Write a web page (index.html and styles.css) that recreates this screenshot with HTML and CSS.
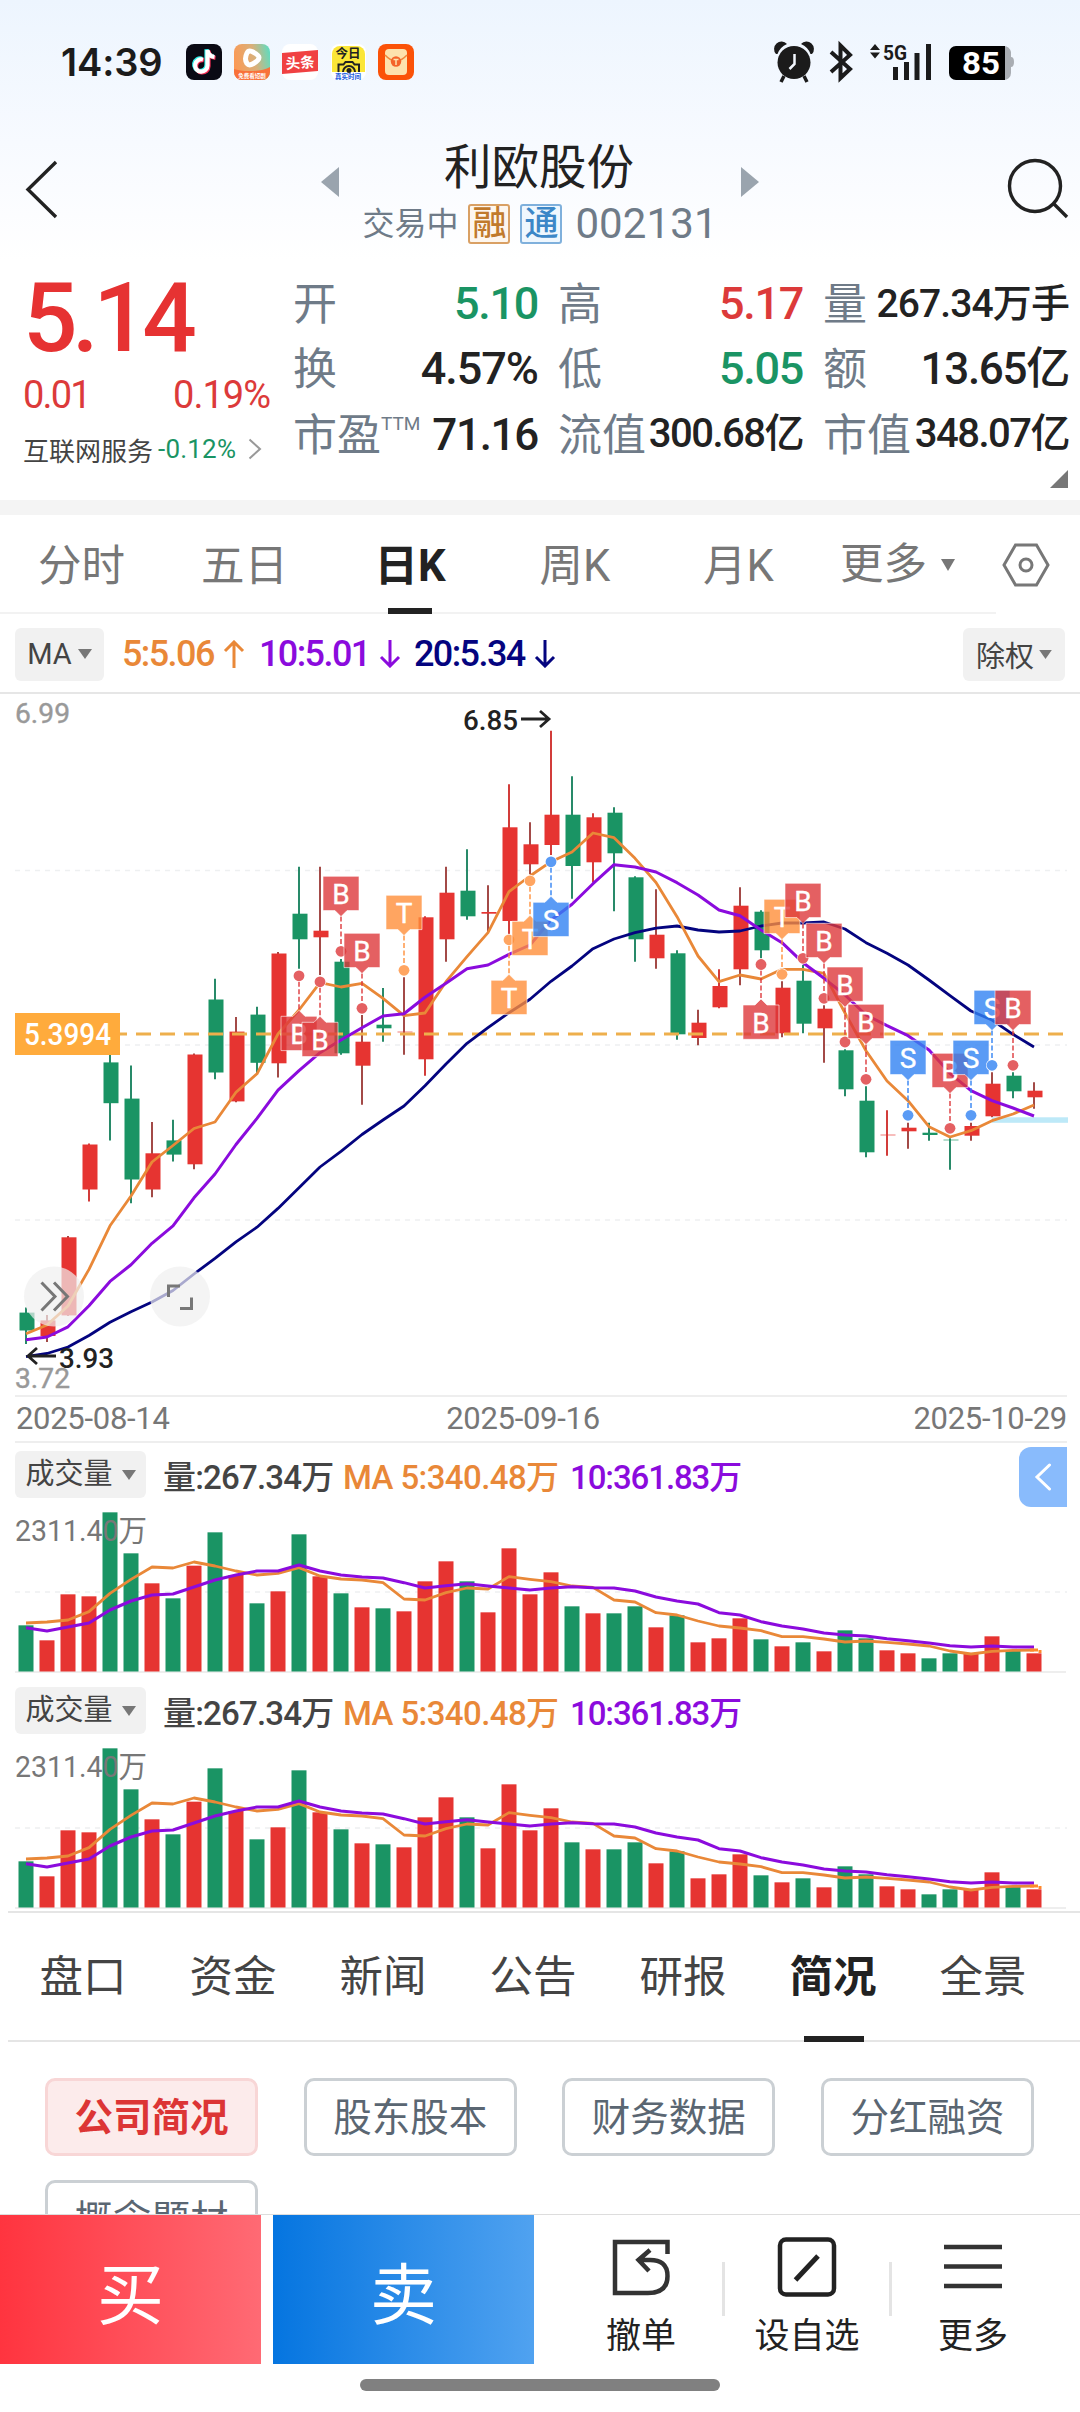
FILE: index.html
```html
<!DOCTYPE html>
<html lang="zh-CN">
<head>
<meta charset="utf-8">
<title>利欧股份 002131</title>
<link rel="stylesheet" href="styles.css">
</head>
<body>
<div class="screen">
  <div class="content">
    <header class="top">
      <div class="status">
        <span class="clock">14:39</span>
        <div class="apps">
          <svg width="36" height="36" viewBox="0 0 36 36"><rect width="36" height="36" rx="8" fill="#0a0a14"/><g fill="none" stroke-width="4.2"><path d="M17 15.500a6.200 6.200 0 1 0 4.500 6V6c.5 4 3 6.500 7 7" transform="translate(-1 -.8)" stroke="#2cf0ea"/><path d="M17 15.500a6.200 6.200 0 1 0 4.500 6V6c.5 4 3 6.500 7 7" transform="translate(1 .8)" stroke="#fb2d55"/><path d="M17 15.500a6.200 6.200 0 1 0 4.500 6V6c.5 4 3 6.500 7 7" stroke="#fff"/></g></svg>
          <svg width="36" height="36" viewBox="0 0 36 36"><defs><linearGradient id="play" x1="0" y1=".4" x2="1" y2=".2"><stop offset="0" stop-color="#fb9a56"/><stop offset=".55" stop-color="#d9b07a"/><stop offset="1" stop-color="#5fdcc0"/></linearGradient></defs><rect width="36" height="36" rx="8" fill="url(#play)"/><path d="M0 25C8 28 28 28 36 23V28a8 8 0 0 1-8 8H8a8 8 0 0 1-8-8Z" fill="#f9713a"/><path d="M13 9c-2 4-2 7.500 0 10.500 1.500 2 4 1.500 6.500 0 3-1.800 5.500-3.500 5.500-6S21 9 18 7.500c-2.500-1-4-.5-5 1.500Z" fill="none" stroke="#fff" stroke-width="5"/><text x="18" y="34" text-anchor="middle" class="app-text" font-size="5.500" fill="#fff">免费看短剧</text></svg>
          <svg width="36" height="36" viewBox="0 0 36 36"><rect width="36" height="36" rx="8" fill="#fff"/><path d="M0 9 36 6V27L0 30Z" fill="#f04142"/><text x="18" y="24" text-anchor="middle" class="app-text" font-size="14.500" fill="#fff" transform="rotate(-4 18 18)">头条</text></svg>
          <svg width="36" height="36" viewBox="0 0 36 36"><rect x="1" width="35" height="36" rx="8" fill="#fff"/><path d="M2 10a8 8 0 0 1 8-8h17a8 8 0 0 1 8 8v18H2Z" fill="#fbe637"/><text x="18" y="14" text-anchor="middle" class="app-text" font-size="12.500" fill="#222">今日</text><path d="M8.500 28V20.500h5l2-2.500h7l2 2.500h4.500V28M13 28a6 6 0 0 1 12 0" fill="none" stroke="#222" stroke-width="2"/><circle cx="19" cy="26.500" r="2.500" fill="#222"/><text x="18" y="34.500" text-anchor="middle" class="app-text" font-size="6.500" fill="#1a5be0">真实时间</text></svg>
          <svg width="36" height="36" viewBox="0 0 36 36"><rect width="36" height="36" rx="8" fill="#fb5208"/><rect x="7" y="5" width="22" height="26" rx="4" fill="#fde2ae"/><path d="M7 11Q18 23 29 11" fill="none" stroke="#f0863c" stroke-width="1.500"/><circle cx="18" cy="17.500" r="5.200" fill="#f4642a"/><path d="M15.500 15.500h5M18 15.500v5.500" stroke="#fde2ae" stroke-width="1.500"/></svg>
        </div>
        <svg class="signals" width="242" height="40" viewBox="0 0 242 40">
          <g fill="#1b1b1b"><circle cx="18" cy="20.500" r="16.500"/><path d="M0 12a7 7 0 0 1 11-10q-7 3-9.500 10ZM36 12A7 7 0 0 0 25 2q7 3 9.500 10Z"/></g>
          <path d="M8 34l-3 6M28 34l3 6" stroke="#1b1b1b" stroke-width="3.500"/><path d="M18.500 12v10l-5 5" fill="none" stroke="#f2f7fe" stroke-width="2.500"/>
          <path d="M55 10l19 17-9.500 9V3.500L74 13 55 30" fill="none" stroke="#1b1b1b" stroke-width="4"/>
          <path d="M94 8 99 2l5 6ZM94 10.500 99 16.500l5-6Z" fill="#1b1b1b"/>
          <text x="107" y="17.500" class="g5" textLength="24" lengthAdjust="spacingAndGlyphs">5G</text>
          <path d="M119.500 25v13M130.500 20v18M141 11v27M152.500 2v36" stroke="#1b1b1b" stroke-width="5" stroke-linecap="butt"/>
          <path d="M227 4h1a7 7 0 0 1 7 6v5q3 0 3 5t-3 5v6a7 7 0 0 1-7 7h-1Z" fill="#a9adb3"/>
          <path d="M180 4h49v34h-49a7 7 0 0 1-7-7V11a7 7 0 0 1 7-7Z" fill="#000"/>
          <text x="186" y="32" class="batt" textLength="38" lengthAdjust="spacingAndGlyphs">85</text>
        </svg>
      </div>
      <div class="navbar">
        <svg class="back" width="34" height="60" viewBox="0 0 34 60"><path d="M31 3 3 30.500 31 58" fill="none" stroke="#222" stroke-width="3.400"/></svg>
        <svg class="tri" width="18" height="30" viewBox="0 0 18 30"><path d="M18 0V30L0 15Z" fill="#9aa4ae"/></svg>
        <div class="title">
          <h1>利欧股份</h1>
          <div class="sub"><span>交易中</span><b class="tag tag-r">融</b><b class="tag tag-t">通</b><span class="code">002131</span></div>
        </div>
        <svg class="tri" width="18" height="30" viewBox="0 0 18 30"><path d="M0 0V30L18 15Z" fill="#9aa4ae"/></svg>
        <svg class="search" width="64" height="64" viewBox="0 0 64 64"><circle cx="29" cy="29" r="25.500" fill="none" stroke="#222" stroke-width="3.400"/><path d="M48 47 61 60" stroke="#222" stroke-width="3.400"/></svg>
      </div>
    </header>

    <section class="quote">
      <div class="price">
        <div class="last">5.14</div>
        <div class="chg"><span>0.01</span><span>0.19%</span></div>
        <div class="sector">互联网服务<i>-0.12%</i><svg width="14" height="22" viewBox="0 0 14 22"><path d="M1.500 1.500 12 11 1.500 20.500" fill="none" stroke="#999" stroke-width="2"/></svg></div>
      </div>
      <dl class="stats">
        <div><dt>开</dt><dd class="green">5.10</dd></div>
        <div><dt>高</dt><dd class="red">5.17</dd></div>
        <div><dt>量</dt><dd class="sm">267.34万手</dd></div>
        <div><dt>换</dt><dd class="pct">4.57%</dd></div>
        <div><dt>低</dt><dd class="green">5.05</dd></div>
        <div><dt>额</dt><dd>13.65亿</dd></div>
        <div><dt>市盈<sup>TTM</sup></dt><dd>71.16</dd></div>
        <div><dt>流值</dt><dd class="md">300.68亿</dd></div>
        <div><dt>市值</dt><dd class="md">348.07亿</dd></div>
      </dl>
      <svg class="corner" width="18" height="18" viewBox="0 0 18 18"><path d="M18 0V18H0Z" fill="#777"/></svg>
    </section>

    <nav class="periods">
      <span>分时</span><span>五日</span><span class="on">日K</span><span>周K</span><span>月K</span>
      <span class="more">更多<svg width="14" height="12" viewBox="0 0 14 12"><path d="M0 0H14L7 12Z" fill="#777"/></svg></span>
      <svg class="hex" width="48" height="44" viewBox="0 0 48 44"><path d="M13.500 2h21L46 22 34.500 42h-21L2 22Z" fill="none" stroke="#777" stroke-width="3"/><circle cx="24" cy="22" r="6" fill="none" stroke="#777" stroke-width="3"/></svg>
    </nav>

    <div class="ma">
      <span class="pick">MA<svg width="14" height="10" viewBox="0 0 14 10"><path d="M0 0H14L7 10Z" fill="#777"/></svg></span>
      <span class="val c5">5:5.06<svg width="22" height="28" viewBox="0 0 22 28"><path d="M11 28V2M2 11l9-9 9 9" fill="none" stroke="currentColor" stroke-width="3"/></svg></span>
      <span class="val c10">10:5.01<svg width="22" height="28" viewBox="0 0 22 28"><path d="M11 0V26M2 17l9 9 9-9" fill="none" stroke="currentColor" stroke-width="3"/></svg></span>
      <span class="val c20">20:5.34<svg width="22" height="28" viewBox="0 0 22 28"><path d="M11 0V26M2 17l9 9 9-9" fill="none" stroke="currentColor" stroke-width="3"/></svg></span>
      <span class="pick right">除权<svg width="13" height="9" viewBox="0 0 14 10"><path d="M0 0H14L7 10Z" fill="#777"/></svg></span>
    </div>

    <svg id="kline" class="kline" width="1080" height="702" viewBox="0 694 1080 702"></svg>
    <div class="dates"><span>2025-08-14</span><span class="mid-date">2025-09-16</span><span>2025-10-29</span></div>

    <section class="vol">
      <div class="vol-head"><span class="pick">成交量<svg width="14" height="10" viewBox="0 0 14 10"><path d="M0 0H14L7 10Z" fill="#777"/></svg></span><span class="v0">量:267.34万</span><span class="c5 v1">MA 5:340.48万</span><span class="c10 v2">10:361.83万</span>
        <span class="drawer"><svg width="18" height="28" viewBox="0 0 18 28"><path d="M15.500 2 3 14l12.500 12" fill="none" stroke="#fff" stroke-width="3" stroke-linecap="round"/></svg></span></div>
      <svg class="vol-chart" width="1080" height="172" viewBox="0 1507 1080 172"></svg>
    </section>
    <section class="vol last-vol">
      <div class="vol-head"><span class="pick">成交量<svg width="14" height="10" viewBox="0 0 14 10"><path d="M0 0H14L7 10Z" fill="#777"/></svg></span><span class="v0">量:267.34万</span><span class="c5 v1">MA 5:340.48万</span><span class="c10 v2">10:361.83万</span></div>
      <svg class="vol-chart" width="1080" height="168" viewBox="0 1507 1080 168"></svg>
    </section>

    <nav class="info"><span>盘口</span><span>资金</span><span>新闻</span><span>公告</span><span>研报</span><span class="on">简况</span><span>全景</span></nav>
    <div class="chips"><span class="on">公司简况</span><span>股东股本</span><span>财务数据</span><span>分红融资</span><span>概念题材</span></div>
  </div>

  <footer class="bar">
    <div class="acts">
      <button class="buy">买</button>
      <button class="sell">卖</button>
      <a class="act"><svg width="60" height="60" viewBox="0 0 60 60"><path d="M56.500 17V5H4v51h33q19.500 0 19.500-17T37 23H28M39 13 27.500 23 38 34" fill="none" stroke="#333" stroke-width="4.500"/></svg><span>撤单</span></a>
      <a class="act mid"><svg width="60" height="60" viewBox="0 0 60 60"><rect x="3" y="2.500" width="54" height="55" rx="6" fill="none" stroke="#222" stroke-width="4.500"/><path d="M18.500 43 41 19" stroke="#222" stroke-width="5"/></svg><span>设自选</span></a>
      <a class="act"><svg width="60" height="60" viewBox="0 0 60 60"><path d="M1 10H59M1 29.500H59M1 49H59" stroke="#333" stroke-width="4.500"/></svg><span>更多</span></a>
    </div>
    <div class="home"></div>
  </footer>
</div>
<script src="charts.js"></script>
</body>
</html>
```
FILE: styles.css
```css
* { box-sizing: border-box; margin: 0; padding: 0; }
body { width: 1080px; background: #fff; color: #222; font-family: Roboto, "Noto Sans CJK SC", sans-serif; }
svg { display: block; flex: none; }
.screen { width: 1080px; height: 2412px; display: flex; flex-direction: column; overflow: hidden; }
.content { height: 2214px; flex: none; overflow: hidden; }
.c5 { color: #e98838; }
.c10 { color: #8b0bdd; }
.c20 { color: #04047f; }
.red { color: #dc3a3a; }
.green { color: #1a9464; }

.top { height: 260px; background: linear-gradient(#edf5fe, #f7faff 55%, #fff); }
.status { height: 120px; padding: 4px 59px 0 61px; display: flex; align-items: center; }
.clock { width: 125px; font: 600 38px/44px Inter, sans-serif; letter-spacing: -.1px; color: #1b1b1b; white-space: nowrap; }
.apps { display: flex; gap: 12px; }
.signals { margin-left: auto; margin-right: 3px; overflow: visible; }
.app-text { font-family: "Noto Sans CJK SC", sans-serif; font-weight: 700; }
.g5 { font: 700 20px Roboto, sans-serif; fill: #1b1b1b; }
.batt { font: 700 31px Roboto, sans-serif; fill: #fff; }
.navbar { height: 140px; display: flex; align-items: flex-start; padding-left: 25px; }
.back { margin-top: 39px; }
.tri { margin-top: 47px; }
.back + .tri { margin-left: 262px; }
.title { width: 402px; margin-top: 18px; display: flex; flex-direction: column; align-items: center; }
.title h1 { font-size: 47.500px; line-height: 60px; font-weight: 400; margin-right: 2px; }
.sub { display: flex; align-items: center; height: 42px; margin-top: 5px; color: #6f7b88; font-size: 32px; }
.sub span { line-height: 42px; }
.tag { width: 42px; height: 40px; border: 2px solid; border-radius: 3px; font-size: 34px; line-height: 35px; font-weight: 500; text-align: center; }
.tag-r { margin-left: 10px; color: #c17a2c; border-color: #d9a064; background: #fdf6ee; }
.tag-t { margin-left: 10px; color: #3c87c7; border-color: #7fb0dc; background: #eff7fe; }
.sub .code { margin-left: 13px; font-size: 42px; letter-spacing: .1px; }
.search { margin-left: 247px; margin-top: 37px; }

.quote { height: 255px; position: relative; border-bottom: 15px solid #f4f4f4; display: flex; }
.price { width: 293px; padding-left: 23px; color: #e63232; }
.last { height: 114px; font-size: 96px; line-height: 116px; letter-spacing: -5.500px; font-weight: 500; }
.chg { margin-top: 2px; height: 38px; width: 247px; display: flex; justify-content: space-between; font-size: 38px; line-height: 38px; letter-spacing: -1px; color: #dc3a3a; }
.chg span:first-child { letter-spacing: -1.800px; }
.sector { margin-top: 18px; height: 34px; display: flex; align-items: center; font-size: 26px; color: #444; white-space: nowrap; }
.sector i { font-style: normal; color: #1a9464; letter-spacing: .2px; margin: 0 12px 0 5px; }
.stats { width: 776px; height: 196px; margin-top: 12px; display: grid; grid-template-columns: 245px 245px 246px; column-gap: 20px; grid-template-rows: repeat(3, 65.500px); }
.stats div { display: flex; justify-content: space-between; align-items: center; white-space: nowrap; }
.stats dt { font-size: 44px; line-height: 64px; color: #6f7b88; display: flex; }
.stats sup { font-size: 19px; line-height: 40px; }
.stats dd { font-size: 44px; line-height: 60px; letter-spacing: -1.300px; font-weight: 500; margin-right: 0; margin-top: -2px; }
.stats dd.red, .stats dd.green { font-size: 45px; }
.stats dd.pct { font-size: 45px; letter-spacing: -1px; }
.stats dd.sm { font-size: 39px; letter-spacing: -.900px; }
.stats dd.md { font-size: 40px; letter-spacing: -1.500px; margin-top: -4px; }
.corner { position: absolute; left: 1050px; top: 210px; }

.periods { height: 99px; display: grid; grid-template-columns: 163px 163px 168px 162px 165px 155px auto; align-items: start; position: relative; }
.periods::after { content: ""; position: absolute; left: 0; bottom: 0; width: 996px; height: 2px; background: #f2f2f2; z-index: -1; }
.periods span { height: 99px; line-height: 104px; font-size: 43.500px; color: #777; text-align: center; white-space: nowrap; }
.periods .on { position: relative; color: #222; font-weight: 700; }
.periods .on::after { content: ""; position: absolute; left: 62px; bottom: 0; width: 44px; height: 6px; background: #222; }
.periods .more { display: flex; align-items: center; gap: 14px; padding-left: 19px; }
.periods .hex { margin: 28px 0 0 26px; }

.ma { height: 80px; display: flex; align-items: center; padding: 2px 15px 0; border-bottom: 2px solid #e6e6e6; }
.pick { height: 53px; border-radius: 6px; background: #f1f1f1; color: #444; display: flex; align-items: center; justify-content: center; white-space: nowrap; }
.ma .pick { width: 89px; font-size: 29px; gap: 6px; }
.ma .right { width: 102px; margin-left: auto; font-size: 29px; gap: 5px; }
.val { display: flex; align-items: center; gap: 9px; font-size: 36px; letter-spacing: -1.600px; font-weight: 500; white-space: nowrap; }
.val.c5 { margin-left: 18px; width: 137px; }
.val.c10 { width: 155px; }

.kline text { font-family: Roboto, sans-serif; }
.dates { height: 48px; margin: -1px 13px 0 15px; border-top: 2px solid #eee; border-bottom: 2px solid #eee; display: flex; justify-content: space-between; font-size: 31px; line-height: 44px; color: #777; padding: 0 0 0 1px; letter-spacing: -.3px; }
.mid-date { margin-right: 37px; }

.vol { height: 236px; }
.last-vol { height: 232px; }
.vol-head { height: 64px; padding: 8px 13px 0 15px; display: flex; align-items: flex-start; font-size: 33px; font-weight: 500; line-height: 53px; white-space: nowrap; }
.vol .pick { width: 131px; height: 47px; font-size: 29px; line-height: 47px; font-weight: 400; gap: 9px; }
.v0 { width: 180px; margin-left: 17px; color: #444; letter-spacing: -.8px; }
.v1 { width: 227px; letter-spacing: -.6px; }
.v2 { letter-spacing: -1.100px; }
.drawer { width: 48px; height: 60px; margin: -4px 0 0 auto; background: #89bbfc; border-radius: 12px 0 0 12px; display: flex; align-items: center; justify-content: center; }
.vol-chart text { font: 400 30px Roboto, "Noto Sans CJK SC", sans-serif; fill: #777; }

.info { height: 131px; margin-left: 8px; padding-right: 22px; border-top: 2px solid #e5e5e5; border-bottom: 2px solid #e5e5e5; display: grid; grid-template-columns: repeat(7, 150px); }
.info span { position: relative; height: 128px; font-size: 43.500px; line-height: 130px; text-align: center; color: #444; }
.info .on { color: #222; font-weight: 700; }
.info .on::after { content: ""; position: absolute; left: 46px; bottom: -1px; width: 60px; height: 6px; background: #222; }
.chips { padding: 36px 46px 0 45px; display: grid; grid-template-columns: repeat(4, 213px); justify-content: space-between; row-gap: 24px; }
.chips span { height: 78px; border: 3px solid #cbd0d4; border-radius: 10px; font-size: 38.500px; line-height: 73px; text-align: center; color: #5a6672; }
.chips .on { background: #fcebeb; border-color: #f8d6d6; color: #dc3535; font-weight: 700; }

.bar { height: 198px; border-top: 1px solid #ddd; background: #fff; }
.acts { height: 149px; display: flex; }
.acts button { width: 261px; margin-right: 12px; border: 0; color: #fff; font: 400 67px/149px "Noto Sans CJK SC", sans-serif; }
.buy { background: linear-gradient(90deg, #ff343f, #ff6a74); }
.sell { background: linear-gradient(90deg, #0575e0, #50a2f0); }
.act { width: 164px; display: flex; flex-direction: column; align-items: center; padding-top: 22px; font-size: 35px; line-height: 48px; gap: 16px; position: relative; }
.acts .sell { margin-right: 25px; }
.act.mid { width: 168px; }
.act.mid::before, .act.mid::after { content: ""; position: absolute; top: 47px; height: 54px; width: 3px; background: #e4e4e4; }
.act.mid::before { left: -1px; }
.act.mid::after { right: -1px; }
.home { width: 360px; height: 12px; margin: 15px auto 0; border-radius: 6px; background: #808080; }
```
FILE: charts.js
```js
const RED = '#e63431', GREEN = '#1a9464', WICK = '#a34a47';
const PINK = '#dd383b', TAN = '#ff8e39', BLUE = '#3182f2';
const cx = i => 26 + 21 * i;
const line = (ys, color, w) =>
  `<polyline points="${ys.map((y, i) => cx(i) + ',' + y).join(' ')}" fill="none" stroke="${color}" stroke-width="${w}" stroke-linejoin="round"/>`;

// [up, body top, body bottom, high, low]
const candles = [
[0,1312.6,1330.5,1307.5,1344],[1,1320.4,1336,1315,1342],[1,1237.3,1315.4,1236,1316],[1,1144.5,1189.5,1143.6,1201.5],
[0,1062.4,1103.2,1050,1140.4],[0,1098.6,1179.5,1065.6,1203.3],[1,1153.3,1189.5,1122,1197.3],[0,1140.4,1154.6,1119.8,1161.5],
[1,1054.5,1164.3,1053.6,1169.3],[0,999.5,1072.5,978.8,1079.3],[1,1031.6,1101.4,1017,1102.3],[0,1014.6,1062.8,1006.8,1074.3],
[1,953.5,1063.3,952,1077.5],[0,913.7,939.3,866.7,968.7],[1,930.7,937.3,866.7,975],[0,961.7,1053.3,959,1054.7],
[1,1041.7,1065.7,1015,1104.7],[0,1024.7,1028.3,988,1041.7],[1,1031.5,1032.5,977.3,1054.7],[1,917.3,1059.3,916.3,1075.7],
[1,892.7,939.3,866.7,961.7],[0,890.7,916.3,849.3,919.7],[1,912,913.7,885.3,933],[1,827.3,921,784.3,935],
[1,844.3,864.3,822.3,874],[1,814.7,845,730.7,855],[0,814.7,866,776.3,898.7],[1,817.3,862.3,813.3,882.3],
[0,812.7,853.3,807.3,911.3],[0,877.3,939.3,876.3,961.7],[1,934.7,958.3,889.3,968.7],[0,953.3,1034.3,950.3,1039.7],
[1,1022.7,1038,1009.7,1045.3],[1,986,1007.3,969.3,1008.3],[1,905.7,969.3,887.3,985.3],[0,911.7,950.3,910.3,958.3],
[1,987.7,1033.3,981.3,1037.3],[0,980.7,1023.7,965,1033.3],[1,1008.7,1028.3,1005.3,1062.7],[0,1050.3,1089.3,1049.3,1096.3],
[0,1100.7,1152.3,1086.3,1157.3],[1,1134.5,1135.5,1110.3,1155.7],[1,1127.7,1131.3,1122.7,1148.7],[0,1132.7,1135,1122.7,1140.7],
[0,1139.5,1140.5,1138.3,1169.7],[1,1126,1135.7,1122.7,1140.7],[1,1083.7,1116.3,1072.3,1117.3],[0,1075.7,1091.3,1072.3,1098.3],
[1,1090.7,1097.3,1082.3,1108.7]];
const ma5 = [1333.7,1325,1306,1269.4,1225.8,1196,1162,1145.5,1128.5,1122,1092.2,1073.8,1034,1010,982.7,987,983.3,998.3,1015.7,1013,981.7,956.7,932.7,891.7,876,861.7,852,833,837.7,858.3,882.5,916.7,956,981.7,975,979,969.3,969.3,973.3,1013,1050.7,1081,1100.7,1126.7,1137,1130.7,1120.7,1114,1105];
const ma10 = [1339.7,1337,1326.8,1305.7,1281.4,1264.8,1243.3,1225.8,1197.8,1174,1144.5,1118.4,1090.2,1070.7,1052.7,1040,1027.7,1016,1013.7,997.3,983.3,968.7,965,954.3,945,920,904.3,883.7,864.7,867,872,882.7,895,910,915.7,930,942.7,962.7,978.3,995,1015,1025.7,1035.7,1050,1073.3,1090.7,1100.7,1108,1116];
const ma20 = [1356.7,1353.5,1347,1335.5,1322.2,1311.7,1302,1290.5,1274,1258.4,1241.9,1227.2,1208.4,1187.7,1167,1151.4,1134.5,1120,1106,1085.7,1064,1043.3,1027.7,1012.7,999.3,981.3,966,948.7,939,932.7,928.2,926,930,932,931,926,923,923,922,929,942.7,953.3,965,980,995.7,1011,1020,1034.3,1047];

// [index, letter, badge top, points up]
const marks = [
[13,'B',1016.3,1],[14,'B',1022.3,1],[15,'B',876.3,0],[16,'B',933.3,0],[18,'T',895.3,0],[23,'T',980.3,1],[24,'T',921.3,1],[25,'S',902.3,1],
[35,'B',1005,1],[36,'T',899.3,0],[37,'B',883.3,0],[38,'B',923.3,0],[39,'B',967,0],[40,'B',1004.3,0],[42,'S',1040.3,0],[44,'B',1053.3,0],
[45,'S',1040.3,0],[46,'S',990.3,0],[47,'B',990.3,0]];

let k = '';
for (const y of [870.5, 1045, 1220]) k += `<path d="M15 ${y}H1067" stroke="#eef0f1" stroke-width="1.6" stroke-dasharray="5 5"/>`;
candles.forEach(([up, t, b, h, l], i) => {
  const c = up ? RED : GREEN, x = cx(i);
  const wick = !up ? '#288a69' : [3,19,23,25,27,33,41].includes(i) ? '#d23c3a' : WICK;
  k += `<path d="M${x} ${h}V${l}" stroke="${wick}" stroke-width="2"/>`;
  k += `<rect x="${x - 6.5}" y="${t}" width="15" height="${b - t}" fill="${c}" ${b - t < 1.1 ? 'opacity=".65"' : ''}/>`;
});
k += `<path d="M112 1034H1064" stroke="#eeaf4c" stroke-width="3" stroke-dasharray="15 9"/>`;
k += `<rect x="992" y="1117.300" width="76" height="5.500" fill="#bde9f8"/>`;
k += line(ma20, '#04047f', 2.8) + line(ma5, '#e98838', 2.8) + line(ma10, '#8b0bdd', 3);
for (const [i, ch, top, up] of marks) {
  const x = cx(i), c = { B: PINK, T: TAN, S: BLUE }[ch];
  const dot = up ? top - 40.5 : top + 75, bot = top + 34.3;
  const shape = up
    ? `M${x - 18} ${top}H${x - 6}L${x} ${top - 6}L${x + 6} ${top}H${x + 18}V${bot}H${x - 18}Z`
    : `M${x - 18} ${top}H${x + 18}V${bot}H${x + 6}L${x} ${bot + 6}L${x - 6} ${bot}H${x - 18}Z`;
  k += `<path d="M${x} ${up ? dot + 6 : bot + 6}V${up ? top - 6 : dot - 6}" stroke="${c}" stroke-opacity=".7" stroke-width="2" stroke-dasharray="5 2.500"/>`;
  k += `<circle cx="${x}" cy="${dot}" r="6" fill="#fff"/><circle cx="${x}" cy="${dot}" r="5.400" fill="${c}" fill-opacity=".8"/>`;
  k += `<path d="${shape}" fill="${c}" fill-opacity=".8" stroke="#fff" stroke-opacity=".6"/>`;
  k += `<text x="${x}" y="${top + 27.5}" font-size="28" font-weight="400" fill="#fff" stroke="#fff" stroke-width=".4" text-anchor="middle">${ch}</text>`;
}
const label = (x, y, s, w, fill, extra = '') => `<text x="${x}" y="${y}" font-size="28" fill="${fill}" textLength="${w}" lengthAdjust="spacingAndGlyphs" ${extra}>${s}</text>`;
k += label(15, 723, '6.99', 55, '#999', 'stroke="#999" stroke-width=".4"') + label(15, 1388, '3.72', 55, '#999', 'stroke="#999" stroke-width=".4"');
k += label(463, 730, '6.85', 55, '#222', 'font-weight="500"') + label(59, 1367.5, '3.93', 55, '#222', 'font-weight="500"');
k += '<path d="M521 719H549M540 711l9 8-9 8" fill="none" stroke="#222" stroke-width="2.800"/>';
k += '<path d="M56 1356H28M37 1348l-9 8 9 8" fill="none" stroke="#222" stroke-width="2.800"/>';
k += '<rect x="15" y="1013" width="105" height="42" fill="#ffab3c"/>';
k += '<text x="24" y="1044.500" font-size="31" font-weight="500" fill="#fff" textLength="87" lengthAdjust="spacingAndGlyphs">5.3994</text>';
k += '<g fill="#f0f0f0" fill-opacity=".7"><circle cx="54" cy="1296.500" r="30"/><circle cx="180" cy="1296.500" r="30"/></g>';
k += '<path d="M41.500 1282.500 55 1296.500 41.500 1310.500M54 1282.500 67.500 1296.500 54 1310.500M168.500 1297V1286H180M191.500 1297.500V1308.500H180" fill="none" stroke="#777" stroke-width="3"/>';
document.getElementById('kline').innerHTML = k;

// bar tops and averages, in thirds of a pixel below y = 1380
const tops = [736,781,643,649,397,520,610,655,557,457,585,670,634,463,589,640,682,685,694,604,544,604,697,505,643,577,679,700,700,679,742,706,787,775,715,778,799,787,814,751,775,811,820,835,820,820,769,811,820];
const falls = new Set([0,4,5,7,9,11,13,15,17,21,26,28,29,31,35,37,39,40,43,44,47]);
const v5 = [729,726,720,695,640,598,561,564,546,558,573,585,580,563,588,597,600,608,657,660,638,624,627,590,598,605,618,622,660,666,698,705,723,738,744,752,770,770,777,786,783,787,792,798,813,822,814,811,810];
const v10 = [743,753,741,729,690,663,645,642,621,600,585,573,573,555,573,585,591,594,608,624,617,611,618,624,630,624,620,623,624,633,651,663,672,698,705,725,738,747,759,765,768,776,782,789,797,801,798,801,801];
const py = v => 1380 + v / 3;
let v = '<path d="M15 1592H1067" stroke="#eef0f1" stroke-width="1.600" stroke-dasharray="5 5"/><path d="M15 1672H1066" stroke="#eee" stroke-width="2"/>';
tops.forEach((t, i) => { v += `<rect x="${cx(i) - 7.5}" y="${py(t)}" width="15" height="${1671.5 - py(t)}" fill="${falls.has(i) ? GREEN : RED}"/>`; });
v += line(v5.map(py), '#e98838', 2.8) + line(v10.map(py), '#8b0bdd', 3);
v += '<path d="M1030 1650H1038M1040 1653V1650" fill="none" stroke="#ff8a2a" stroke-width="3"/>';
v += '<text x="15" y="1541" textLength="132" lengthAdjust="spacingAndGlyphs">2311.40万</text>';
document.querySelectorAll('.vol-chart').forEach(el => { el.innerHTML = v; });
```
